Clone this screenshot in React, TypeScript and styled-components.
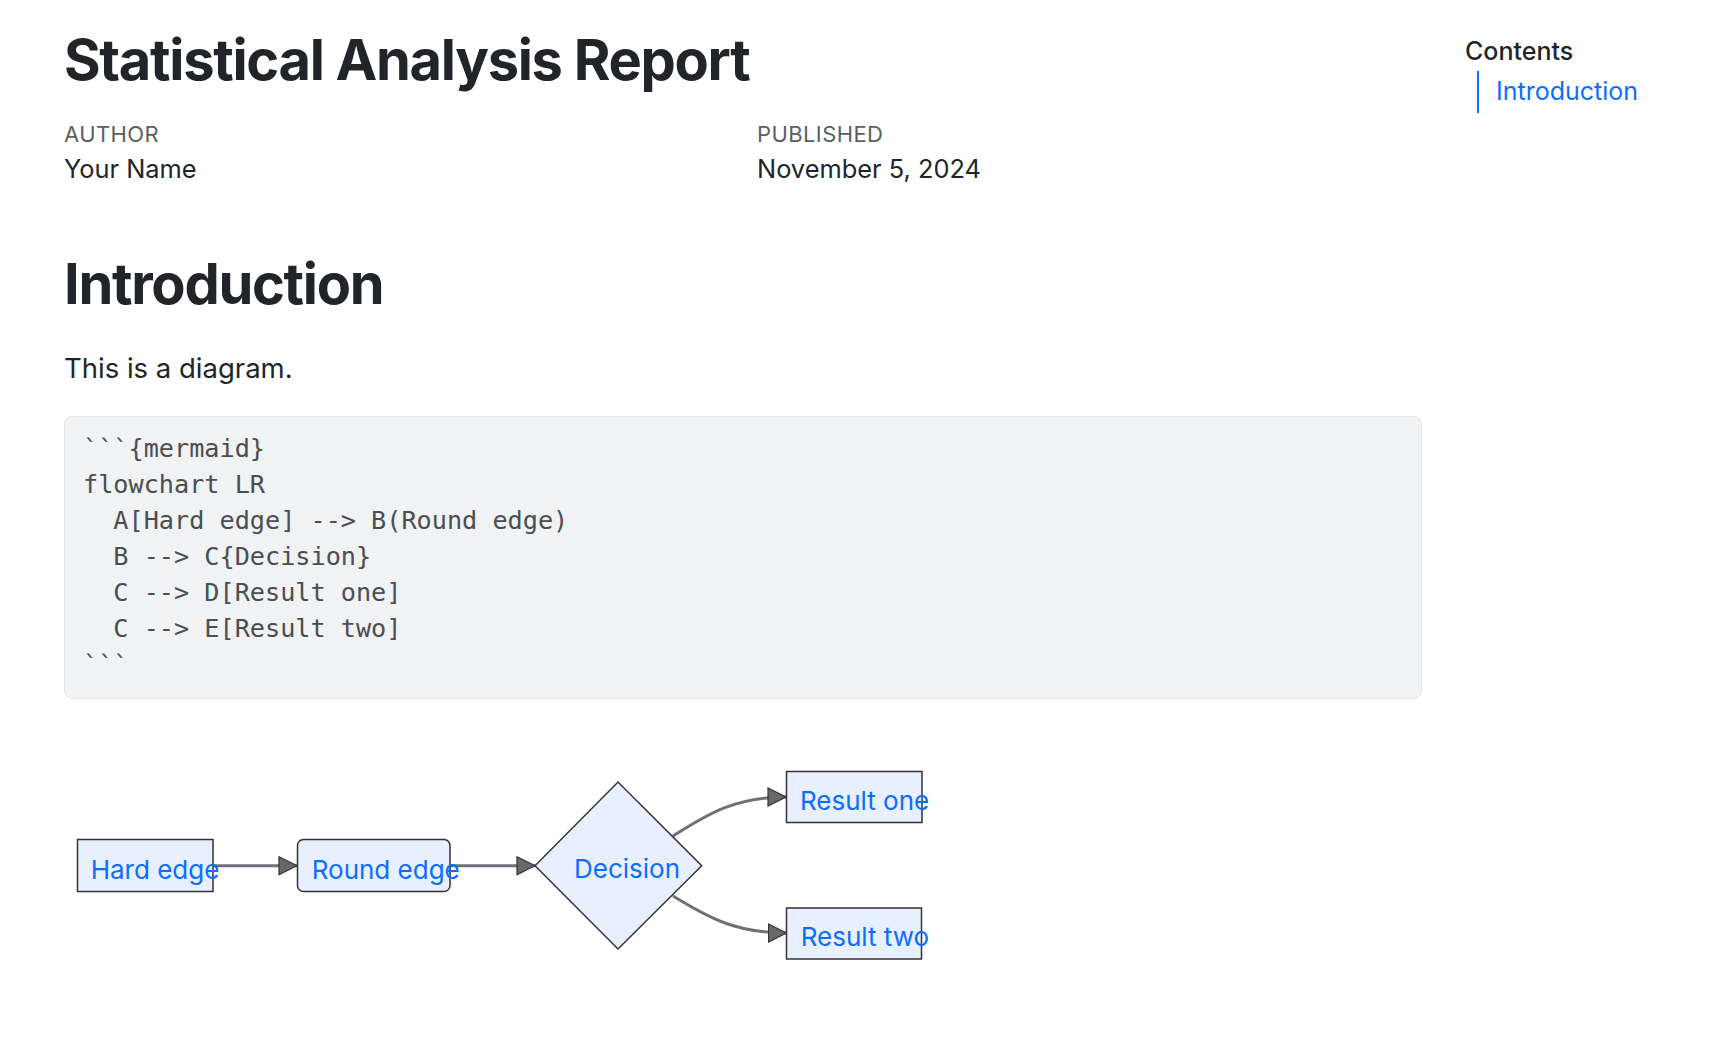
import * as React from "react"
import styled, { createGlobalStyle } from "styled-components"

const GlobalStyle = createGlobalStyle`
  body {
    margin: 0;
    background: #ffffff;
    color: #212529;
    font-family: Inter, "Noto Sans", sans-serif;
  }
`

const Colors = {
  TEXT: "#212529",
  MUTED: "#5a5f64",
  LINK: "#0d6efd",
  CODE_BG: "#f1f2f4",
  CODE_BORDER: "#e6e7e9",
  CODE_TEXT: "#4a4d51",
  NODE_FILL: "#e8efff",
  NODE_STROKE: "#333333",
  EDGE: "#6e7176",
}

const Page = styled.div`
  display: grid;
  grid-template-columns: 1358px 1fr;
  column-gap: 43px;
  padding-left: 64px;
  width: 1728px;
  min-height: 1058px;
  box-sizing: border-box;
`

const Main = styled.main`
  display: flex;
  flex-direction: column;
  padding-top: 27px;
`

const Title = styled.h1`
  margin: 0;
  font-size: 56px;
  line-height: 1.2;
  font-weight: 700;
  letter-spacing: -1.3px;
  color: ${Colors.TEXT};
`

const Meta = styled.div`
  display: grid;
  grid-template-columns: 693px 1fr;
  margin-top: 25px;
`

const MetaLabel = styled.div`
  font-size: 22px;
  line-height: 30px;
  letter-spacing: 0.4px;
  color: ${Colors.MUTED};
  text-transform: uppercase;
`

const MetaValue = styled.div`
  margin-top: 2px;
  font-size: 25.4px;
  line-height: 36px;
  color: ${Colors.TEXT};
`

const SectionTitle = styled.h2`
  margin: 64px 0 0;
  font-size: 56px;
  line-height: 1.2;
  font-weight: 700;
  letter-spacing: -1.3px;
  color: ${Colors.TEXT};
`

const Paragraph = styled.p`
  margin: 30px 0 0;
  font-size: 27.5px;
  line-height: 1.5;
  color: ${Colors.TEXT};
`

const CodeBlock = styled.pre`
  margin: 26px 0 0;
  padding: 14px 18px 15px;
  background: ${Colors.CODE_BG};
  border: 1px solid ${Colors.CODE_BORDER};
  border-radius: 8px;
  font-family: "DejaVu Sans Mono", "Liberation Mono", monospace;
  font-size: 25.2px;
  line-height: 36px;
  color: ${Colors.CODE_TEXT};
  white-space: pre;
`

const Diagram = styled.svg`
  display: block;
  margin-top: 41px;
`

const Toc = styled.nav`
  padding-top: 35px;
`

const TocTitle = styled.div`
  font-size: 25px;
  line-height: 33px;
  font-weight: 500;
  color: ${Colors.TEXT};
`

const TocList = styled.ul`
  list-style: none;
  margin: 3px 0 0 12px;
  padding: 0 0 0 17px;
  border-left: 2px solid ${Colors.LINK};
`

const TocItem = styled.li`
  font-size: 25px;
  line-height: 41.6px;
  a {
    color: ${Colors.LINK};
    text-decoration: none;
  }
`

const code = `\`\`\`{mermaid}
flowchart LR
  A[Hard edge] --> B(Round edge)
  B --> C{Decision}
  C --> D[Result one]
  C --> E[Result two]
\`\`\``

const labelStyle = {
  fill: Colors.LINK,
  fontSize: 26,
  fontFamily: "Inter, 'Noto Sans', sans-serif",
}

const Flowchart: React.FC = () => (
  <Diagram width={880} height={240} viewBox="0 0 880 240">
    <defs>
      <marker
        id="arrow"
        viewBox="0 0 20 20"
        refX="19"
        refY="10"
        markerWidth="20"
        markerHeight="20"
        markerUnits="userSpaceOnUse"
        orient="auto"
      >
        <path d="M1,1 L19,10 L1,19 Z" fill="#66696e" stroke="#333" strokeWidth="1.2" />
      </marker>
    </defs>
    <g fill="none" stroke={Colors.EDGE} strokeWidth="3">
      <path d="M149,125.7 L233,125.7" markerEnd="url(#arrow)" />
      <path d="M386,125.7 L471,125.7" markerEnd="url(#arrow)" />
      <path d="M609,96 C645,73 672,57 722,57" markerEnd="url(#arrow)" />
      <path d="M609,156 C645,178 672,193 722.5,193" markerEnd="url(#arrow)" />
    </g>
    <g fill={Colors.NODE_FILL} stroke={Colors.NODE_STROKE} strokeWidth="1.5">
      <rect x="13.5" y="99.5" width="135.5" height="52" />
      <rect x="233.5" y="99.5" width="152.5" height="52" rx="6" />
      <path d="M471,125.7 L554,42 L637.7,125.7 L554,209 Z" />
      <rect x="722.5" y="31.5" width="135.5" height="51" />
      <rect x="722.5" y="168" width="135" height="51" />
    </g>
    <text x="26.7" y="139" style={labelStyle}>Hard edge</text>
    <text x="247.7" y="139" style={labelStyle}>Round edge</text>
    <text x="510" y="138.3" style={labelStyle}>Decision</text>
    <text x="736" y="70" style={labelStyle}>Result one</text>
    <text x="736.7" y="205.7" style={labelStyle}>Result two</text>
  </Diagram>
)

const App: React.FC = () => (
  <>
    <GlobalStyle />
    <Page>
      <Main>
        <Title>Statistical Analysis Report</Title>
        <Meta>
          <div>
            <MetaLabel>Author</MetaLabel>
            <MetaValue>Your Name</MetaValue>
          </div>
          <div>
            <MetaLabel>Published</MetaLabel>
            <MetaValue>November 5, 2024</MetaValue>
          </div>
        </Meta>
        <SectionTitle id="introduction">Introduction</SectionTitle>
        <Paragraph>This is a diagram.</Paragraph>
        <CodeBlock>{code}</CodeBlock>
        <Flowchart />
      </Main>
      <Toc>
        <TocTitle>Contents</TocTitle>
        <TocList>
          <TocItem>
            <a href="#introduction">Introduction</a>
          </TocItem>
        </TocList>
      </Toc>
    </Page>
  </>
)

export default App
